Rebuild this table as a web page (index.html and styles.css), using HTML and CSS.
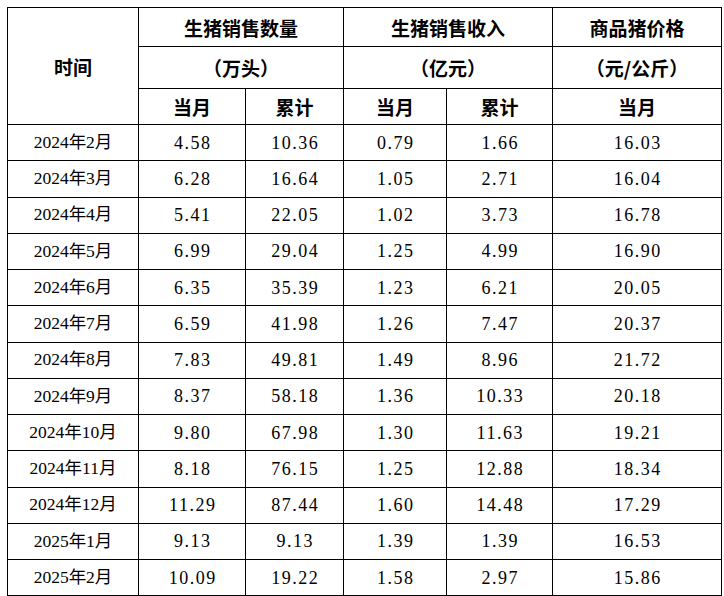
FILE: index.html
```html
<!DOCTYPE html>
<html lang="zh-CN">
<head>
<meta charset="utf-8">
<title>生猪销售情况</title>
<link rel="stylesheet" href="styles.css">
</head>
<body>
<table class="sales">
  <colgroup>
    <col class="c-time">
    <col class="c-qm">
    <col class="c-qc">
    <col class="c-rm">
    <col class="c-rc">
    <col class="c-price">
  </colgroup>
  <thead>
    <tr class="h1">
      <th rowspan="3" class="hd">时间</th>
      <th colspan="2" class="hd">生猪销售数量</th>
      <th colspan="2" class="hd">生猪销售收入</th>
      <th class="hd">商品猪价格</th>
    </tr>
    <tr class="h2">
      <th colspan="2" class="hd">（万头）</th>
      <th colspan="2" class="hd">（亿元）</th>
      <th class="hd">（元/公斤）</th>
    </tr>
    <tr class="h3">
      <th class="hd">当月</th>
      <th class="hd">累计</th>
      <th class="hd">当月</th>
      <th class="hd">累计</th>
      <th class="hd">当月</th>
    </tr>
  </thead>
  <tbody>
    <tr><td class="date">2024年2月</td><td>4.58</td><td>10.36</td><td>0.79</td><td>1.66</td><td>16.03</td></tr>
    <tr><td class="date">2024年3月</td><td>6.28</td><td>16.64</td><td>1.05</td><td>2.71</td><td>16.04</td></tr>
    <tr><td class="date">2024年4月</td><td>5.41</td><td>22.05</td><td>1.02</td><td>3.73</td><td>16.78</td></tr>
    <tr><td class="date">2024年5月</td><td>6.99</td><td>29.04</td><td>1.25</td><td>4.99</td><td>16.90</td></tr>
    <tr><td class="date">2024年6月</td><td>6.35</td><td>35.39</td><td>1.23</td><td>6.21</td><td>20.05</td></tr>
    <tr><td class="date">2024年7月</td><td>6.59</td><td>41.98</td><td>1.26</td><td>7.47</td><td>20.37</td></tr>
    <tr><td class="date">2024年8月</td><td>7.83</td><td>49.81</td><td>1.49</td><td>8.96</td><td>21.72</td></tr>
    <tr><td class="date">2024年9月</td><td>8.37</td><td>58.18</td><td>1.36</td><td>10.33</td><td>20.18</td></tr>
    <tr><td class="date">2024年10月</td><td>9.80</td><td>67.98</td><td>1.30</td><td>11.63</td><td>19.21</td></tr>
    <tr><td class="date">2024年11月</td><td>8.18</td><td>76.15</td><td>1.25</td><td>12.88</td><td>18.34</td></tr>
    <tr><td class="date">2024年12月</td><td>11.29</td><td>87.44</td><td>1.60</td><td>14.48</td><td>17.29</td></tr>
    <tr><td class="date">2025年1月</td><td>9.13</td><td>9.13</td><td>1.39</td><td>1.39</td><td>16.53</td></tr>
    <tr><td class="date">2025年2月</td><td>10.09</td><td>19.22</td><td>1.58</td><td>2.97</td><td>15.86</td></tr>
  </tbody>
</table>
</body>
</html>
```
FILE: styles.css
```css
html, body {
  margin: 0;
  padding: 0;
  background: #ffffff;
}
body {
  padding: 7px 0 0 7px;
}
.sales {
  border-collapse: collapse;
  table-layout: fixed;
  width: 714px;
  color: #000;
}
.c-time { width: 131px; }
.c-qm { width: 107px; }
.c-qc { width: 98px; }
.c-rm { width: 103px; }
.c-rc { width: 106px; }
.c-price { width: 169px; }

.sales th,
.sales td {
  border: 1px solid #000;
  padding: 0;
  text-align: center;
  vertical-align: middle;
}
.hd {
  font-family: "Noto Sans CJK SC", sans-serif;
  font-weight: 700;
  font-size: 19px;
  line-height: 1;
}
.h1 { height: 39px; }
.h2 { height: 42px; }
.h3 { height: 36px; }
.sales tbody tr { height: 36.25px; }
.sales td {
  font-family: "Liberation Serif", "Noto Sans CJK SC", serif;
  font-size: 18px;
  line-height: 1;
  letter-spacing: 1.5px;
  text-indent: 1.5px;
}
.sales td.date {
  letter-spacing: 0;
  text-indent: 0;
  font-size: 17.5px;
}
```
